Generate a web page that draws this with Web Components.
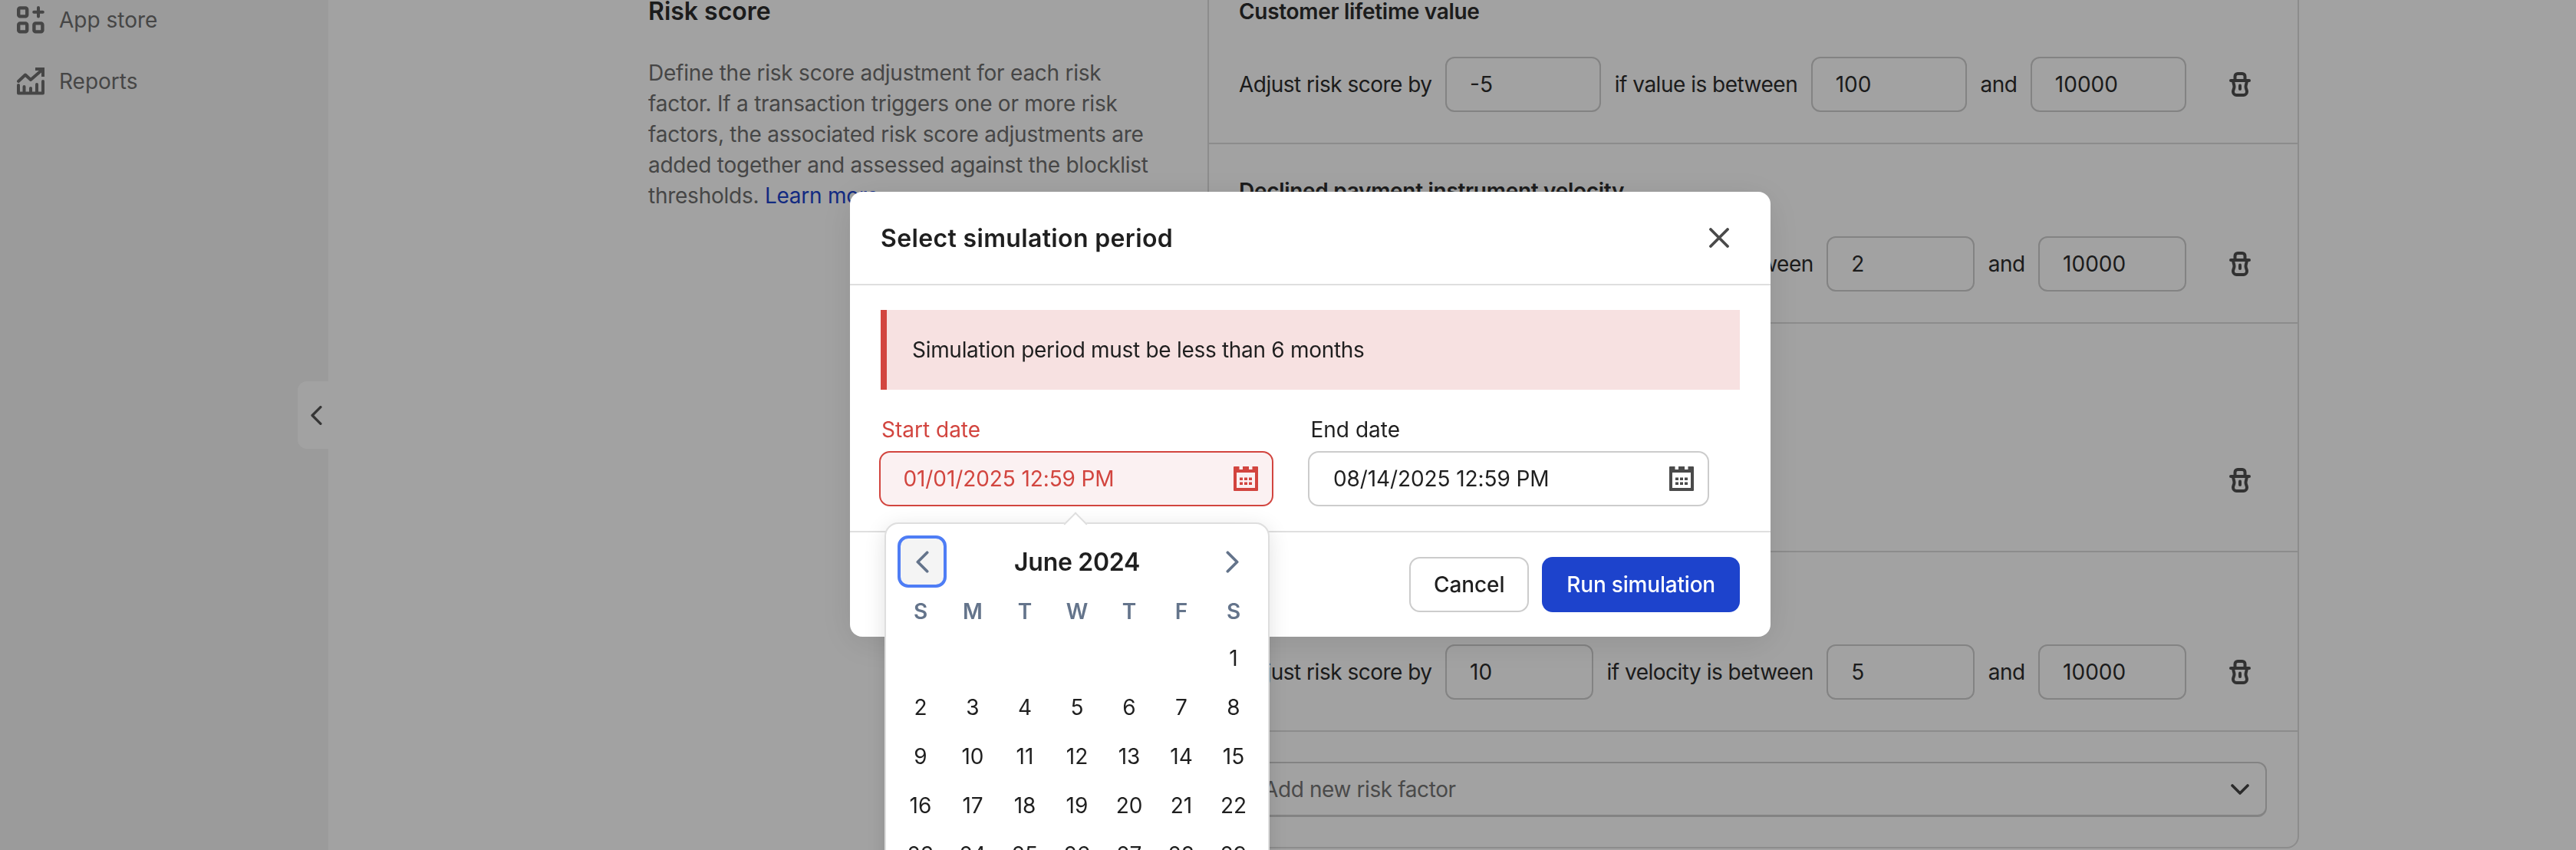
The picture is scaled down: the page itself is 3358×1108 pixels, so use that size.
<!DOCTYPE html>
<html lang="en">
<head>
<meta charset="utf-8">
<title>Risk score</title>
<style>
  html, body { margin: 0; height: 100%; overflow: hidden; background: #fff; }
  body { font-family: Inter, "Noto Sans", sans-serif; font-size: 28px; }
</style>
</head>
<body>
<app-shell>
  <app-sidebar slot="side">
    <nav-item icon="apps">App store</nav-item>
    <nav-item icon="reports">Reports</nav-item>
  </app-sidebar>
  <risk-page slot="main">
    <span slot="heading">Risk score</span>
    <span slot="intro">Define the risk score adjustment for each risk factor. If a transaction triggers one or more risk factors, the associated risk score adjustments are added together and assessed against the blocklist thresholds. <risk-link>Learn more</risk-link></span>
    <risk-row heading="Customer lifetime value">
      <span>Adjust risk score by</span><num-field>-5</num-field>
      <span>if value is between</span><num-field>100</num-field>
      <span>and</span><num-field>10000</num-field>
    </risk-row>
    <risk-row heading="Declined payment instrument velocity">
      <span>Adjust risk score by</span><num-field></num-field>
      <span>if velocity is between</span><num-field>2</num-field>
      <span>and</span><num-field>10000</num-field>
    </risk-row>
    <risk-row tall></risk-row>
    <risk-row>
      <span>Adjust risk score by</span><num-field>10</num-field>
      <span>if velocity is between</span><num-field>5</num-field>
      <span>and</span><num-field>10000</num-field>
    </risk-row>
    <add-select>Add new risk factor</add-select>
  </risk-page>
</app-shell>
<modal-overlay></modal-overlay>
<sim-modal></sim-modal>

<script>
const ICONS = {
  apps: `<svg width="36" height="36" viewBox="0 0 36 36" fill="none" stroke="currentColor" stroke-width="4.4" stroke-linecap="round">
    <rect x="2.2" y="2.4" width="11" height="11" rx="2"/>
    <rect x="2.2" y="22.4" width="11" height="11" rx="2"/>
    <rect x="22.4" y="22.4" width="11" height="11" rx="2"/>
    <path d="M28 2v11.4M22.2 7.7h11.6" stroke-width="4"/>
  </svg>`,
  reports: `<svg width="36" height="36" viewBox="0 0 36 36" fill="none" stroke="currentColor" stroke-width="4" stroke-linecap="round" stroke-linejoin="round">
    <path d="M2 18l9-8.5 7 6.5L33 3"/>
    <path d="M24 2h10v10" stroke-linecap="butt" stroke-linejoin="miter"/>
    <path d="M2 33.5h32M2 23v10M9.500 25v8M18 27v6M26 22v11M34 18v15"/>
  </svg>`,
  trash: `<svg width="28" height="32" viewBox="0 0 28 32" fill="none" stroke="currentColor" stroke-width="4" stroke-linecap="round">
    <path d="M7.500 10V5.500a3.500 3.500 0 0 1 3.500-3.500h6a3.500 3.500 0 0 1 3.500 3.500V10"/>
    <path d="M2 11h24"/>
    <path d="M5 11c0 3 1.500 5 1.500 8s-1.500 4-1.500 6.500A4.500 4.500 0 0 0 9.500 30h9a4.500 4.500 0 0 0 4.500-4.500c0-2.500-1.500-3.500-1.500-6.500s1.500-5 1.500-8"/>
    <path d="M14 17.500v4.500"/>
  </svg>`,
  calendar: `<svg width="32" height="32" viewBox="0 0 32 32" fill="currentColor">
    <path fill-rule="evenodd" d="M1 0h6.500v4h4.500V0h8v4h4.500V0H31a1 1 0 0 1 1 1v30a1 1 0 0 1-1 1H1a1 1 0 0 1-1-1V1a1 1 0 0 1 1-1zM4 8v20h24V8z"/>
    <path d="M8 14.500h4v3.500H8zM14 14.500h4v3.500h-4zM20 14.500h4v3.500h-4zM8 20.500h4V24H8zM14 20.500h4V24h-4zM20 20.500h4V24h-4z"/>
  </svg>`,
  close: `<svg width="26" height="26" viewBox="0 0 26 26" fill="none" stroke="currentColor" stroke-width="3.800" stroke-linecap="round">
    <path d="M2 2l22 22M24 2L2 24"/>
  </svg>`,
  left: `<svg width="18" height="30" viewBox="0 0 18 30" fill="none" stroke="currentColor" stroke-width="4" stroke-linecap="round" stroke-linejoin="round">
    <path d="M15.500 2L2.500 15l13 13"/>
  </svg>`,
  right: `<svg width="18" height="30" viewBox="0 0 18 30" fill="none" stroke="currentColor" stroke-width="4" stroke-linecap="round" stroke-linejoin="round">
    <path d="M2.500 2l13 13-13 13"/>
  </svg>`,
  down: `<svg width="24" height="14" viewBox="0 0 24 14" fill="none" stroke="currentColor" stroke-width="3.600" stroke-linecap="round" stroke-linejoin="round">
    <path d="M2 2l10 10L22 2"/>
  </svg>`
};

// small base: every element stamps its markup into an open shadow root
class ShadowElement extends HTMLElement {
  constructor() {
    super();
    this.shadow = this.attachShadow({ mode: "open" });
  }
  connectedCallback() {
    this.shadow.innerHTML = `<style>${this.styles()}</style>${this.markup()}`;
  }
}

class AppShell extends ShadowElement {
  styles() {
    return `:host { display: flex; width: 100%; height: 100vh; overflow: hidden; position: relative; }
      .side { flex: 0 0 428px; }
      .main { flex: 1; min-width: 0; }`;
  }
  markup() {
    return `<div class="side"><slot name="side"></slot></div><div class="main"><slot name="main"></slot></div>`;
  }
}

class AppSidebar extends ShadowElement {
  styles() {
    return `:host { display: block; box-sizing: border-box; height: 100vh; background: #f4f4f4; padding: 8px 0 0 22px; position: relative; }
      .tab { position: absolute; right: 0; top: 497px; width: 40px; height: 88px; background: #fff; border-radius: 12px 0 0 12px;
        color: #555; display: flex; align-items: center; justify-content: flex-end; padding-right: 8px; box-sizing: border-box; }
      .tab svg { width: 15px; height: 25px; }`;
  }
  markup() {
    return `<slot></slot><div class="tab">${ICONS.left}</div>`;
  }
}

class NavItem extends ShadowElement {
  styles() {
    return `:host { display: flex; align-items: center; gap: 19px; height: 36px; margin-bottom: 44px; color: #6e6e6e; font-size: 28px; line-height: 36px; }
      svg { display: block; }`;
  }
  markup() {
    return `${ICONS[this.getAttribute("icon")]}<span><slot></slot></span>`;
  }
}

class RiskPage extends ShadowElement {
  styles() {
    return `:host { display: flex; margin-top: -48px; padding-left: 417px; }
      .intro { flex: 0 0 729px; padding-top: 43px; }
      h2 { margin: 0 0 40px; font-size: 32px; line-height: 40px; font-weight: 600; color: #2c2c2c; }
      p { margin: 0; width: 670px; font-size: 28px; line-height: 40px; color: #6e6e6e; letter-spacing: -0.25px; }
      .card { flex: 0 0 1423px; box-sizing: border-box; border: 2px solid #dcdcdc; border-radius: 16px; height: 1154px; }`;
  }
  markup() {
    return `<div class="intro"><h2><slot name="heading"></slot></h2><p><slot name="intro"></slot></p></div>
      <div class="card"><slot></slot></div>`;
  }
}

class RiskLink extends ShadowElement {
  styles() { return `:host { color: #1d43cc; }`; }
  markup() { return `<slot></slot>`; }
}

class RiskRow extends ShadowElement {
  styles() {
    return `:host { display: block; box-sizing: border-box; border-bottom: 2px solid #dcdcdc; padding: 49px 61px 40px 39px; color: #2c2c2c; }
      :host([tall]) { padding-top: 97px; padding-bottom: 56px; }
      h3 { margin: 0 0 47px; height: 24px; font-size: 28px; line-height: 24px; font-weight: 600; letter-spacing: -0.3px; white-space: nowrap; }
      .controls { display: flex; align-items: center; gap: 17.500px; height: 72px; white-space: nowrap; font-size: 28px; letter-spacing: -0.5px; }
      ::slotted(num-field) { flex: 1 1 0; min-width: 0; letter-spacing: 0; }
      .trash { margin-left: 38.500px; display: flex; color: #505050; flex: 0 0 28px; }`;
  }
  markup() {
    const heading = this.getAttribute("heading") || "";
    const spacer = this.hasAttribute("tall") ? `<div style="flex:1"></div>` : "";
    return `<h3>${heading}</h3><div class="controls"><slot></slot>${spacer}<div class="trash">${ICONS.trash}</div></div>`;
  }
}

class NumField extends ShadowElement {
  styles() {
    return `:host { display: block; box-sizing: border-box; height: 72px; border: 2px solid #cecece; border-radius: 12px; padding-left: 30px; line-height: 68px; font-size: 28px; color: #2c2c2c; }`;
  }
  markup() { return `<slot></slot>`; }
}

class AddSelect extends ShadowElement {
  styles() {
    return `:host { display: block; padding: 39px 40px 0 39px; }
      .box { display: flex; align-items: center; justify-content: space-between; box-sizing: border-box; height: 72px; border: 2px solid #cecece; border-bottom-width: 3px; border-radius: 12px; padding: 0 21px 0 30px; color: #757575; font-size: 28px; letter-spacing: -0.4px; }
      .chev { display: flex; color: #444; }`;
  }
  markup() {
    return `<div class="box"><span><slot></slot></span><span class="chev">${ICONS.down}</span></div>`;
  }
}

class ModalOverlay extends ShadowElement {
  styles() { return `:host { display: block; position: fixed; inset: 0; background: rgba(0, 0, 0, .365); }`; }
  markup() { return ``; }
}

class DateField extends ShadowElement {
  styles() {
    return `:host { display: block; color: #1f1f1f; }
      :host([error]) { color: #d2453f; }
      label { display: block; padding-left: 3.500px; height: 32px; line-height: 32px; margin-bottom: 12px; font-size: 28px; }
      .box { display: flex; align-items: center; justify-content: space-between; box-sizing: border-box; height: 72px; border: 2px solid #cccccc; border-radius: 14px; padding: 0 18px 0 31px; font-size: 28px; letter-spacing: -0.1px; background: #fff; }
      :host([error]) .box { border-color: #d2453f; background: #fbf1f2; padding-left: 30px; }
      .icon { display: flex; color: #4a4a4a; }
      :host([error]) .icon { color: #d2453f; }`;
  }
  markup() {
    return `<label>${this.getAttribute("label")}</label>
      <div class="box"><span>${this.getAttribute("value")}</span><span class="icon">${ICONS.calendar}</span></div>`;
  }
}

class CalPopup extends ShadowElement {
  styles() {
    return `:host { display: block; position: absolute; left: 45px; top: 431px; width: 502px; box-sizing: border-box; background: #fff; border: 2px solid #dedede; border-radius: 18px; padding: 15px 11px 0; box-shadow: 0 6px 28px rgba(0,0,0,.12); color: #1f1f1f; }
      .arrow { position: absolute; left: 236px; top: -11px; width: 20px; height: 20px; background: #fff; border: 2px solid #dedede; border-width: 2px 0 0 2px; transform: rotate(45deg); }
      .head { display: flex; align-items: center; justify-content: space-between; height: 68px; padding: 0 4px; margin-bottom: 11px; position: relative; }
      .nav { width: 64px; height: 68px; box-sizing: border-box; display: flex; align-items: center; justify-content: center; color: #64748b; border-radius: 14px; }
      .nav.focus { background: #f4f4f4; border: 4px solid #4e7df5; }
      .nav svg { width: 17px; height: 29px; }
      .title { font-size: 32px; font-weight: 600; letter-spacing: -0.3px; }
      .grid { display: grid; grid-template-columns: repeat(7, 68px); justify-items: center; align-items: center; }
      .wd { height: 40px; line-height: 40px; font-size: 28px; font-weight: 600; color: #64748b; margin-bottom: 9px; }
      .d { height: 64px; line-height: 64px; font-size: 28px; }`;
  }
  markup() {
    const week = ["S", "M", "T", "W", "T", "F", "S"].map(w => `<div class="wd">${w}</div>`).join("");
    let days = "<div></div>".repeat(6);
    for (let i = 1; i <= 30; i++) days += `<div class="d">${i}</div>`;
    return `<div class="arrow"></div>
      <div class="head">
        <div class="nav focus">${ICONS.left}</div>
        <div class="title">June 2024</div>
        <div class="nav">${ICONS.right}</div>
      </div>
      <div class="grid">${week}${days}</div>`;
  }
}

class SimModal extends ShadowElement {
  styles() {
    return `:host { display: block; position: fixed; left: 1108px; top: 250px; width: 1200px; box-sizing: border-box; background: #fff; border-radius: 16px; box-shadow: 0 8px 48px rgba(0,0,0,.1); color: #1f1f1f; }
      header { display: flex; align-items: center; justify-content: space-between; box-sizing: content-box; height: 118px; padding: 2px 54px 0 40px; border-bottom: 2px solid #dfdfdf; }
      h1 { margin: 0; font-size: 32px; line-height: 40px; font-weight: 600; letter-spacing: 0.35px; }
      .close { display: flex; color: #4a4a4a; margin-top: -3px; }
      .body { padding: 32px 40px; border-bottom: 2px solid #dfdfdf; }
      .alert { box-sizing: border-box; height: 104px; background: #f7e1e1; border-left: 8px solid #d2453f; padding-left: 33px; display: flex; align-items: center; font-size: 28px; letter-spacing: -0.3px; margin-bottom: 36px; }
      .dates { display: flex; gap: 45.500px; margin-left: -2.500px; }
      .dates date-field:first-child { flex: 0 0 514px; }
      .dates date-field:last-child { flex: 0 0 523px; }
      footer { display: flex; justify-content: flex-end; gap: 17px; padding: 32px 40px; }
      .btn { box-sizing: border-box; height: 72px; border-radius: 14px; display: flex; align-items: center; font-size: 28px; font-weight: 500; }
      .cancel { border: 2px solid #cccccc; padding: 0 30px; letter-spacing: -0.1px; }
      .run { background: #1d43cc; color: #fff; padding: 0 32px; letter-spacing: -0.2px; }`;
  }
  markup() {
    return `<header><h1>Select simulation period</h1><span class="close">${ICONS.close}</span></header>
      <div class="body">
        <div class="alert">Simulation period must be less than 6 months</div>
        <div class="dates">
          <date-field error label="Start date" value="01/01/2025 12:59 PM"></date-field>
          <date-field label="End date" value="08/14/2025 12:59 PM"></date-field>
        </div>
      </div>
      <footer><div class="btn cancel">Cancel</div><div class="btn run">Run simulation</div></footer>
      <cal-popup></cal-popup>`;
  }
}

customElements.define("app-shell", AppShell);
customElements.define("app-sidebar", AppSidebar);
customElements.define("nav-item", NavItem);
customElements.define("risk-page", RiskPage);
customElements.define("risk-link", RiskLink);
customElements.define("risk-row", RiskRow);
customElements.define("num-field", NumField);
customElements.define("add-select", AddSelect);
customElements.define("modal-overlay", ModalOverlay);
customElements.define("date-field", DateField);
customElements.define("cal-popup", CalPopup);
customElements.define("sim-modal", SimModal);
</script>
</body>
</html>
